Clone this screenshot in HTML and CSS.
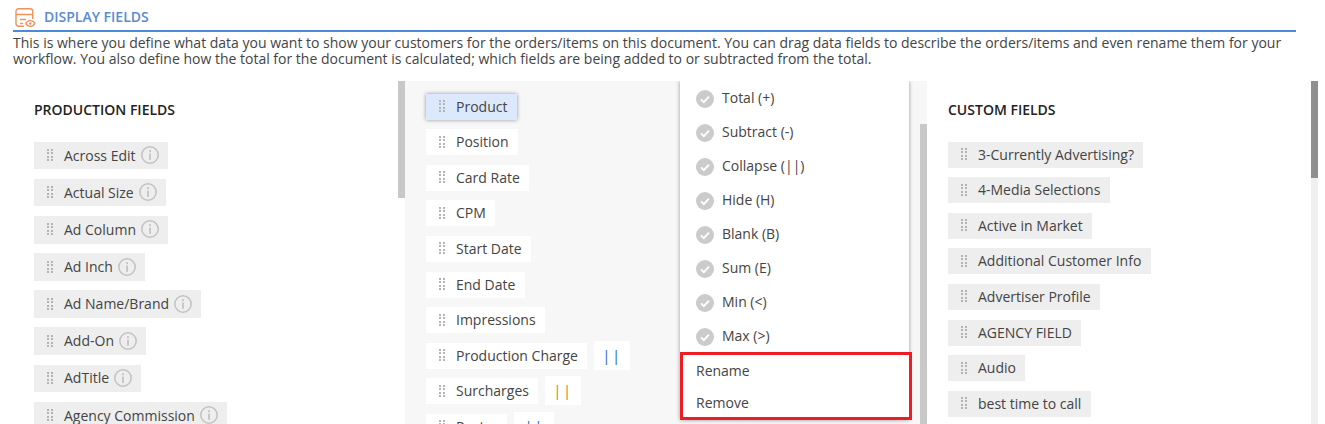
FILE: index.html
```html
<!DOCTYPE html>
<html lang="en">
<head>
<meta charset="utf-8">
<title>Display Fields</title>
<link rel="stylesheet" href="styles.css">
</head>
<body>
<svg class="defs" width="0" height="0" aria-hidden="true">
  <symbol id="grip" viewBox="0 0 6 12">
    <g fill="#b4b4b4">
      <rect x="0" y="0" width="2" height="2"/><rect x="4" y="0" width="2" height="2"/>
      <rect x="0" y="3" width="2" height="2"/><rect x="4" y="3" width="2" height="2"/>
      <rect x="0" y="7" width="2" height="2"/><rect x="4" y="7" width="2" height="2"/>
      <rect x="0" y="10" width="2" height="2"/><rect x="4" y="10" width="2" height="2"/>
    </g>
  </symbol>
  <symbol id="info" viewBox="0 0 18 18">
    <circle cx="9" cy="9" r="8.200" fill="none" stroke="#c2c2c2" stroke-width="1.500"/>
    <rect x="8.100" y="7.600" width="1.800" height="6.200" fill="#c2c2c2"/>
    <rect x="8.100" y="4.200" width="1.800" height="2" fill="#c2c2c2"/>
  </symbol>
  <symbol id="check" viewBox="0 0 18 18">
    <circle cx="9" cy="9" r="9" fill="#cbcbcb"/>
    <path d="M5 9.400l2.800 2.700L13 6.600" fill="none" stroke="#fff" stroke-width="1.900"/>
  </symbol>
</svg>

<header class="title-bar">
  <svg class="title-icon" width="21" height="20" viewBox="0 0 21 20" fill="none" stroke="#f0905a" stroke-width="1.400">
    <path d="M9 18.200H3.500a2.500 2.500 0 0 1-2.500-2.500V3.300a2.500 2.500 0 0 1 2.500-2.500h11.700a2.500 2.500 0 0 1 2.500 2.500V11"/>
    <path d="M1 6.500h16.700M5 11.500h6M5 15.500h3"/>
    <path d="M10.800 15.500c1.800-3.800 7.200-3.800 9 0-1.800 3.800-7.200 3.800-9 0z" stroke-width="1.300"/>
    <circle cx="15.300" cy="15.500" r="1.200" fill="#f0905a" stroke="none"/>
  </svg>
  <h1 class="title">DISPLAY FIELDS</h1>
</header>
<p class="intro">This is where you define what data you want to show your customers for the orders/items on this document. You can drag data fields to describe the orders/items and even rename them for your workflow. You also define how the total for the document is calculated; which fields are being added to or subtracted from the total.</p>

<main class="columns">
  <section class="col col-left">
    <h2 class="col-title">PRODUCTION FIELDS</h2>
    <ul class="chips chips-left">
      <li class="chip grey"><svg class="grip"><use href="#grip"/></svg>Across Edit<svg class="info"><use href="#info"/></svg></li>
      <li class="chip grey"><svg class="grip"><use href="#grip"/></svg>Actual Size<svg class="info"><use href="#info"/></svg></li>
      <li class="chip grey"><svg class="grip"><use href="#grip"/></svg>Ad Column<svg class="info"><use href="#info"/></svg></li>
      <li class="chip grey"><svg class="grip"><use href="#grip"/></svg>Ad Inch<svg class="info"><use href="#info"/></svg></li>
      <li class="chip grey"><svg class="grip"><use href="#grip"/></svg>Ad Name/Brand<svg class="info"><use href="#info"/></svg></li>
      <li class="chip grey"><svg class="grip"><use href="#grip"/></svg>Add-On<svg class="info"><use href="#info"/></svg></li>
      <li class="chip grey"><svg class="grip"><use href="#grip"/></svg>AdTitle<svg class="info"><use href="#info"/></svg></li>
      <li class="chip grey"><svg class="grip"><use href="#grip"/></svg>Agency Commission<svg class="info"><use href="#info"/></svg></li>
    </ul>
    <div class="bar bar-left"></div>
  </section>

  <section class="col col-mid">
    <ul class="chips chips-mid">
      <li class="row"><span class="chip selected"><svg class="grip"><use href="#grip"/></svg>Product</span></li>
      <li class="row"><span class="chip white"><svg class="grip"><use href="#grip"/></svg>Position</span></li>
      <li class="row"><span class="chip white"><svg class="grip"><use href="#grip"/></svg>Card Rate</span></li>
      <li class="row"><span class="chip white"><svg class="grip"><use href="#grip"/></svg>CPM</span></li>
      <li class="row"><span class="chip white"><svg class="grip"><use href="#grip"/></svg>Start Date</span></li>
      <li class="row"><span class="chip white"><svg class="grip"><use href="#grip"/></svg>End Date</span></li>
      <li class="row"><span class="chip white"><svg class="grip"><use href="#grip"/></svg>Impressions</span></li>
      <li class="row"><span class="chip white"><svg class="grip"><use href="#grip"/></svg>Production Charge</span><span class="op blue">||</span></li>
      <li class="row"><span class="chip white"><svg class="grip"><use href="#grip"/></svg>Surcharges</span><span class="op orange">||</span></li>
      <li class="row"><span class="chip white"><svg class="grip"><use href="#grip"/></svg>Poster</span><span class="op op-wide blue">||</span></li>
    </ul>
    <div class="bar bar-mid"></div>
    <div class="menu">
      <ul class="menu-list">
        <li class="menu-item"><svg class="check"><use href="#check"/></svg>Total (+)</li>
        <li class="menu-item"><svg class="check"><use href="#check"/></svg>Subtract (-)</li>
        <li class="menu-item"><svg class="check"><use href="#check"/></svg>Collapse (||)</li>
        <li class="menu-item"><svg class="check"><use href="#check"/></svg>Hide (H)</li>
        <li class="menu-item"><svg class="check"><use href="#check"/></svg>Blank (B)</li>
        <li class="menu-item"><svg class="check"><use href="#check"/></svg>Sum (E)</li>
        <li class="menu-item"><svg class="check"><use href="#check"/></svg>Min (&lt;)</li>
        <li class="menu-item"><svg class="check"><use href="#check"/></svg>Max (&gt;)</li>
      </ul>
      <div class="menu-actions">
        <div class="action">Rename</div>
        <div class="action">Remove</div>
      </div>
    </div>
  </section>

  <section class="col col-right">
    <h2 class="col-title">CUSTOM FIELDS</h2>
    <ul class="chips chips-right">
      <li class="chip grey"><svg class="grip"><use href="#grip"/></svg>3-Currently Advertising?</li>
      <li class="chip grey"><svg class="grip"><use href="#grip"/></svg>4-Media Selections</li>
      <li class="chip grey"><svg class="grip"><use href="#grip"/></svg>Active in Market</li>
      <li class="chip grey"><svg class="grip"><use href="#grip"/></svg>Additional Customer Info</li>
      <li class="chip grey"><svg class="grip"><use href="#grip"/></svg>Advertiser Profile</li>
      <li class="chip grey"><svg class="grip"><use href="#grip"/></svg>AGENCY FIELD</li>
      <li class="chip grey"><svg class="grip"><use href="#grip"/></svg>Audio</li>
      <li class="chip grey"><svg class="grip"><use href="#grip"/></svg>best time to call</li>
    </ul>
    <div class="bar bar-right"></div>
  </section>
</main>
</body>
</html>
```
FILE: styles.css
```css
html, body {
  margin: 0;
  height: 424px;
  overflow: hidden;
  background: #fff;
}
body {
  font-family: "Open Sans", sans-serif;
  font-size: 14px;
  color: #444;
}
ul { list-style: none; margin: 0; padding: 0; }
.defs { display: block; height: 0; }

.title-bar {
  display: flex;
  align-items: center;
  gap: 8px;
  height: 32px;
  margin: 0 29px 0 13px;
  padding-left: 2px;
  padding-top: 3px;
  box-sizing: border-box;
  border-bottom: 2px solid #4a8ad8;
}
.title-icon { flex: none; margin-top: 2px; }
.title {
  margin: 0 0 1px;
  font-size: 14px;
  font-weight: 600;
  color: #5a8ad6;
}
.intro {
  margin: 3px 20px 0 13px;
  line-height: 16px;
  color: #444;
  width: 1290px;
}

.columns {
  display: flex;
  height: 343px;
  margin-top: 14px;
  overflow: hidden;
}
.col { position: relative; box-sizing: border-box; }
.col-left { width: 405px; padding: 19px 0 0 34px; }
.col-mid { width: 522px; background: #f7f7f7; padding: 12.6px 0 0 21px; }
.col-right { flex: 1; padding: 19px 0 0 21px; }
.col-title {
  margin: 0;
  font-size: 14px;
  font-weight: 600;
  line-height: 19px;
  color: #222;
}

.chips { display: flex; flex-direction: column; align-items: flex-start; }
.chips-left { gap: 9.55px; margin-top: 22.7px; }
.chips-mid { gap: 9.6px; }
.chips-right { gap: 9.6px; margin-top: 22.6px; }

.chip {
  display: flex;
  align-items: center;
  box-sizing: border-box;
  height: 26px;
  padding: 0 9.3px 1px 13px;
  line-height: 19px;
  white-space: nowrap;
}
.chips-left .chip { height: 27.6px; padding-bottom: .8px; padding-right: 9.4px; }
.grey { background: #eee; }
.white { background: #fff; }
.selected { background: #dce8fb; box-shadow: 0 0 4px rgba(0, 0, 0, .4); }
.grip { flex: none; width: 6px; height: 12px; margin-right: 11px; }
.info { flex: none; width: 18px; height: 18px; margin-left: 5px; }

.row { display: flex; gap: 7px; height: 26px; }
.op {
  display: flex;
  align-items: center;
  justify-content: center;
  width: 36px;
  height: 29px;
  margin-top: -2px;
  background: #fff;
  letter-spacing: 2px;
}
.op-wide { width: 40px; }
.blue { color: #1760c4; }
.orange { color: #c87a10; }

.bar { position: absolute; width: 7px; }
.bar-left { top: 0; left: 398px; height: 117px; background: #c8c8c8; }
.bar-mid { top: 43px; right: 0; bottom: 0; background: #c8c8c8; }
.bar-right { top: 0; left: 384px; bottom: 0; background: #f0f0f0; border-top: 97px solid #8f8f8f; }

.menu {
  position: absolute;
  top: 0;
  left: 275px;
  width: 229px;
  height: 339px;
  background: #fff;
  box-shadow: 0 0 4px rgba(0, 0, 0, .4);
}
.menu-item {
  display: flex;
  align-items: center;
  gap: 8px;
  box-sizing: border-box;
  height: 34px;
  padding: 0 0 2px 16px;
  color: #444;
}
.check { flex: none; width: 18px; height: 18px; margin-top: 4px; }
.menu-actions {
  box-sizing: border-box;
  position: absolute;
  top: 271px;
  left: 0;
  width: 232px;
  height: 68px;
  border: 3px solid #ee1c25;
  background: #fff;
}
.action { height: 32px; line-height: 32px; padding-left: 13px; color: #444; }
```
